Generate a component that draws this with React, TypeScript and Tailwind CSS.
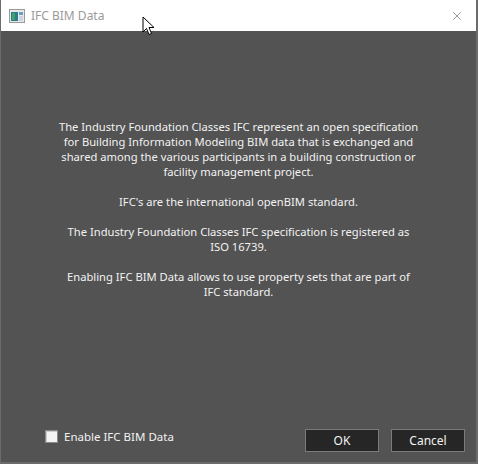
import { X } from "lucide-react";

const paragraphs = [
  [
    "The Industry Foundation Classes IFC represent an open specification",
    "for Building Information Modeling BIM data that is exchanged and",
    "shared among the various participants in a building construction or",
    "facility management project.",
  ],
  ["IFC's are the international openBIM standard."],
  [
    "The Industry Foundation Classes IFC specification is registered as",
    "ISO 16739.",
  ],
  [
    "Enabling IFC BIM Data allows to use property sets that are part of",
    "IFC standard.",
  ],
];

function AppIcon() {
  return (
    <svg width="16" height="14" viewBox="0 0 16 14">
      <rect x="0.5" y="0.5" width="15" height="13" fill="#e8e8e8" stroke="#9a9a9a" />
      <rect x="2" y="3" width="7" height="9" fill="#2f7a8c" />
      <rect x="3" y="4" width="3" height="7" fill="#3aa46a" />
      <rect x="10" y="3" width="4" height="3" fill="#6aa0c8" />
      <rect x="10" y="7" width="4" height="5" fill="#c9d6e0" />
    </svg>
  );
}

function Cursor() {
  return (
    <svg width="14" height="21" viewBox="0 0 14 21" className="absolute left-[141px] top-[16px]">
      <path d="M1 1 L1 16 L4.5 12.5 L7 18.5 L9.5 17.5 L7 11.5 L12 11.5 Z" fill="#fff" stroke="#000" strokeWidth="1" strokeLinejoin="miter" />
    </svg>
  );
}

export default function App() {
  return (
    <div
      className="relative w-[478px] h-[464px] flex flex-col bg-[#535353] border-l border-r-2 border-b-2 border-[#6b6b6b] overflow-hidden"
      style={{ fontFamily: '"Noto Sans", "Segoe UI", sans-serif' }}
    >
      <header className="h-[31px] bg-white flex items-center pl-2 pr-3 shrink-0">
        <AppIcon />
        <span className="ml-[6px] text-[12px] text-[#9a9a9a]">IFC BIM Data</span>
        <X className="ml-auto w-[14px] h-[14px] text-[#6f6f6f]" strokeWidth={1.2} />
      </header>

      <main className="flex-1 flex flex-col items-center pt-[88px] text-[11.2px] leading-[15px] text-[#f2f2f2] text-center gap-[15px]">
        {paragraphs.map((lines, i) => (
          <p key={i}>
            {lines.map((l) => (
              <span key={l} className="block">{l}</span>
            ))}
          </p>
        ))}
      </main>

      <footer className="h-[44px] shrink-0 flex items-start pl-[44px] pr-[11px] pt-[11px]">
        <label className="flex items-center gap-[6px] text-[11.5px] leading-[15px] text-[#f2f2f2]">
          <span className="w-[13px] h-[13px] bg-[#f4f4f4] border border-[#8a8a8a] shadow-[inset_1px_1px_0_#ccc]" />
          Enable IFC BIM Data
        </label>
        <div className="ml-auto flex gap-[12px]">
          <button className="w-[74px] h-[23px] bg-[#262626] border border-[#7a7a7a] text-[12px] text-[#f2f2f2]">OK</button>
          <button className="w-[74px] h-[23px] bg-[#262626] border border-[#7a7a7a] text-[12px] text-[#f2f2f2]">Cancel</button>
        </div>
      </footer>

      <Cursor />
    </div>
  );
}
